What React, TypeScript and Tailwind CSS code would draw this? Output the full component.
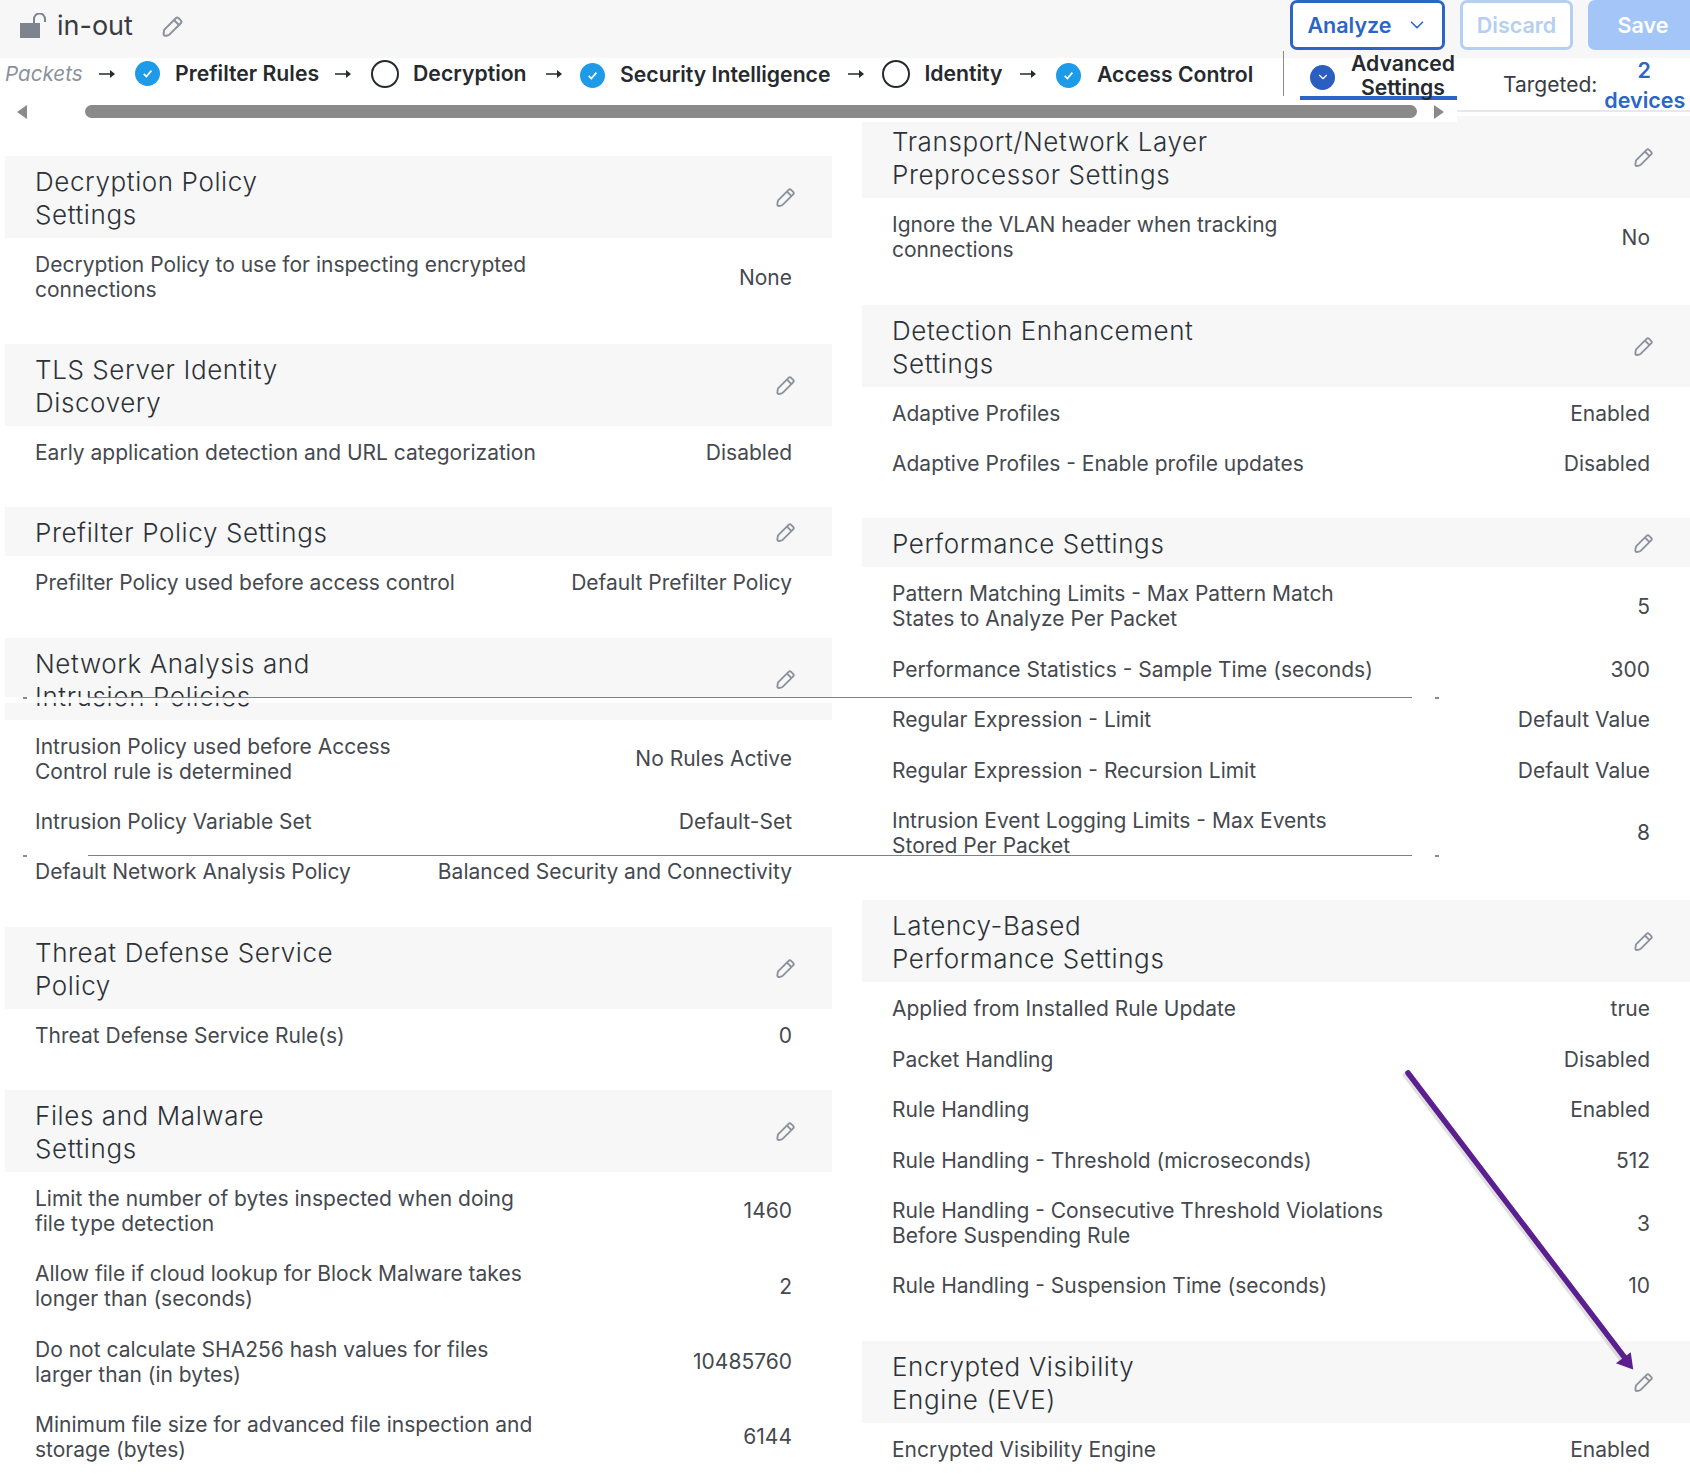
import React from 'react';
import {ChevronDown} from 'lucide-react';

type Row = {label: string; value: string};
type Section = {title: string; rows: Row[]};

const leftSections: Section[] = [
	{title: 'Decryption Policy\nSettings', rows: [{label: 'Decryption Policy to use for inspecting encrypted\nconnections', value: 'None'}]},
	{title: 'TLS Server Identity\nDiscovery', rows: [{label: 'Early application detection and URL categorization', value: 'Disabled'}]},
	{title: 'Prefilter Policy Settings', rows: [{label: 'Prefilter Policy used before access control', value: 'Default Prefilter Policy'}]},
	{
		title: 'Network Analysis and\nIntrusion Policies',
		rows: [
			{label: 'Intrusion Policy used before Access\nControl rule is determined', value: 'No Rules Active'},
			{label: 'Intrusion Policy Variable Set', value: 'Default-Set'},
			{label: 'Default Network Analysis Policy', value: 'Balanced Security and Connectivity'},
		],
	},
	{title: 'Threat Defense Service\nPolicy', rows: [{label: 'Threat Defense Service Rule(s)', value: '0'}]},
	{
		title: 'Files and Malware\nSettings',
		rows: [
			{label: 'Limit the number of bytes inspected when doing\nfile type detection', value: '1460'},
			{label: 'Allow file if cloud lookup for Block Malware takes\nlonger than (seconds)', value: '2'},
			{label: 'Do not calculate SHA256 hash values for files\nlarger than (in bytes)', value: '10485760'},
			{label: 'Minimum file size for advanced file inspection and\nstorage (bytes)', value: '6144'},
		],
	},
];

const rightSections: Section[] = [
	{title: 'Transport/Network Layer\nPreprocessor Settings', rows: [{label: 'Ignore the VLAN header when tracking\nconnections', value: 'No'}]},
	{
		title: 'Detection Enhancement\nSettings',
		rows: [
			{label: 'Adaptive Profiles', value: 'Enabled'},
			{label: 'Adaptive Profiles - Enable profile updates', value: 'Disabled'},
		],
	},
	{
		title: 'Performance Settings',
		rows: [
			{label: 'Pattern Matching Limits - Max Pattern Match\nStates to Analyze Per Packet', value: '5'},
			{label: 'Performance Statistics - Sample Time (seconds)', value: '300'},
			{label: 'Regular Expression - Limit', value: 'Default Value'},
			{label: 'Regular Expression - Recursion Limit', value: 'Default Value'},
			{label: 'Intrusion Event Logging Limits - Max Events\nStored Per Packet', value: '8'},
		],
	},
	{
		title: 'Latency-Based\nPerformance Settings',
		rows: [
			{label: 'Applied from Installed Rule Update', value: 'true'},
			{label: 'Packet Handling', value: 'Disabled'},
			{label: 'Rule Handling', value: 'Enabled'},
			{label: 'Rule Handling - Threshold (microseconds)', value: '512'},
			{label: 'Rule Handling - Consecutive Threshold Violations\nBefore Suspending Rule', value: '3'},
			{label: 'Rule Handling - Suspension Time (seconds)', value: '10'},
		],
	},
	{title: 'Encrypted Visibility\nEngine (EVE)', rows: [{label: 'Encrypted Visibility Engine', value: 'Enabled'}]},
];

function PencilIcon({className}: {className?: string}) {
	return (
		<svg viewBox="0 0 24 24" className={className} fill="none" stroke="#8b929c" strokeWidth="2" strokeLinejoin="round">
			<path d="M3.6 15.4 14.8 4.2a2 2 0 0 1 2.8 0l2.2 2.2a2 2 0 0 1 0 2.8L8.6 20.4a3.5 3.5 0 0 1-2 1l-2.4.4a1.4 1.4 0 0 1-1.6-1.6l.3-2.6a3.5 3.5 0 0 1 .7-2.2Z"/>
			<path d="M13 6l5 5"/>
		</svg>
	);
}

function CheckCircle({color = '#1d9be8'}: {color?: string}) {
	return (
		<span className="flex size-[25px] shrink-0 items-center justify-center rounded-full" style={{backgroundColor: color}}>
			<svg viewBox="0 0 12 12" className="size-[13px]" fill="none" stroke="white" strokeWidth="1.6">
				<path d="M2.5 6.3 5 8.8l4.6-5.4"/>
			</svg>
		</span>
	);
}

function ArrowIcon({className}: {className?: string}) {
	return (
		<svg viewBox="0 0 16 12" className={`h-[12px] w-[16px] shrink-0 ${className ?? ''}`} fill="#26292e">
			<path d="M0 5.2h11V2l5 4-5 4V6.8H0Z"/>
		</svg>
	);
}

function Step({label, done, className}: {label: string; done: boolean; className?: string}) {
	return (
		<div className={`flex shrink-0 items-center ${done ? 'gap-[15.5px]' : 'gap-[14px]'} ${className ?? ''}`}>
			{done ? <CheckCircle/> : <span className="size-[28px] shrink-0 rounded-full border-2 border-[#26292e]"/>}
			<span className="text-[21.2px] font-semibold text-[#26292e]">{label}</span>
		</div>
	);
}

function SectionBlock({section, gap}: {section: Section; gap: string}) {
	return (
		<section className={gap}>
			<div className="flex items-center justify-between bg-[#f7f7f7] pb-[7px] pl-[30px] pr-[35px] pt-[9px]">
				<h2 className="whitespace-pre-line text-[26px] font-[350] leading-[33px] tracking-[0.6px] text-[#2d3238]">{section.title}</h2>
				<PencilIcon className="mt-[-2px] size-[22px] shrink-0"/>
			</div>
			<div className="pb-[12.5px] pl-[30px] pr-[40px] pt-[14px]">
				{section.rows.map((row) => (
					<div key={row.label} className="flex items-center justify-between pb-[25.4px] text-[21px] leading-[25px] text-[#45494f] last:pb-0">
						<span className="whitespace-pre-line">{row.label}</span>
						<span className="whitespace-nowrap">{row.value}</span>
					</div>
				))}
			</div>
		</section>
	);
}

function AdvancedDot() {
	return (
		<span className="flex size-[25px] shrink-0 items-center justify-center rounded-full bg-[#2b5fbf]">
			<ChevronDown className="size-[14px] text-white" strokeWidth={2}/>
		</span>
	);
}

function ScrollGhost({top}: {top: string}) {
	return (
		<div className={`absolute left-[5px] z-10 h-[6px] w-[1452px] bg-white/90 ${top}`}>
			<span className="absolute left-[18px] top-0 h-[2px] w-[4px] bg-[#8a8a8a]"/>
			<div className="absolute left-[83px] top-0 h-px w-[1324px] bg-[#808080]"/>
			<span className="absolute left-[1430px] top-0 h-[2px] w-[4px] bg-[#8a8a8a]"/>
		</div>
	);
}

export default function App() {
	return (
		<div className="relative h-[1477px] w-[1690px] overflow-hidden bg-white font-['Inter',sans-serif]">
			<header className="flex h-[58px] items-start justify-between bg-[#f7f7f7]">
				<div className="flex h-[52px] items-center pl-[20px]">
					<svg viewBox="0 0 28 26" className="h-[26px] w-[28px]">
						<rect x="0" y="10" width="20" height="15" fill="#7d848e"/>
						<path d="M14 11V6a5.5 5.5 0 0 1 11 0v3" fill="none" stroke="#7d848e" strokeWidth="2"/>
					</svg>
					<span className="ml-[9px] text-[27px] text-[#383c42]">in-out</span>
					<PencilIcon className="ml-[28px] size-[24px]"/>
				</div>
				<div className="flex items-start gap-[15px]">
					<button className="flex h-[50px] w-[155px] items-center justify-center gap-[14px] rounded-[7px] border-[3px] border-[#2b66c4] bg-white text-[21.5px] font-semibold text-[#2b66c4]">
						Analyze
						<ChevronDown className="size-[22px]" strokeWidth={1.8}/>
					</button>
					<button className="h-[50px] w-[113px] rounded-[7px] border-[3px] border-[#b4cff2] bg-white text-[21.5px] font-semibold text-[#b4cff2]">Discard</button>
					<button className="h-[50px] w-[102px] rounded-l-[7px] bg-[#a3c5f7] pl-[8px] text-[21.5px] font-semibold text-white">Save</button>
				</div>
			</header>

			<div className="flex h-[58px] items-start">
				<div className="relative z-10 ml-[5px] h-[64px] w-[1452px] bg-white">
					<div className="flex h-[47px] items-start">
						<div className="flex h-[32px] items-center">
							<span className="text-[20.6px] italic text-[#8b929c]">Packets</span>
							<ArrowIcon className="ml-[16px]"/>
							<Step label="Prefilter Rules" done className="ml-[20px]"/>
							<ArrowIcon className="ml-[16px]"/>
							<Step label="Decryption" done={false} className="ml-[20px]"/>
							<ArrowIcon className="ml-[19px]"/>
							<Step label="Security Intelligence" done className="ml-[18px] mt-[2px]"/>
							<ArrowIcon className="ml-[18px]"/>
							<Step label="Identity" done={false} className="ml-[18px]"/>
							<ArrowIcon className="ml-[18px]"/>
							<Step label="Access Control" done className="ml-[20px] mt-[2px]"/>
						</div>
						<div className="ml-[30px] mt-[-7px] h-[45px] w-px shrink-0 bg-[#8b8b8b]"/>
						<div className="ml-[16px] flex h-[42px] w-[157px] shrink-0 items-center gap-[14px] border-b-4 border-[#2b66c4] pl-[10px]">
							<AdvancedDot/>
							<span className="mt-[-5px] w-[108px] whitespace-nowrap text-center text-[21.2px] font-semibold leading-[24px] text-[#26292e]">Advanced<br/>Settings</span>
						</div>
					</div>
					<div className="flex h-[17px] items-start">
						<span className="ml-[12px] h-0 w-0 border-y-[7px] border-r-[10px] border-y-transparent border-r-[#8a8a8a]"/>
						<div className="ml-[58px] h-[13px] w-[1332px] rounded-full bg-[#8a8a8a]"/>
						<span className="ml-[17px] h-0 w-0 border-y-[7px] border-l-[10px] border-y-transparent border-l-[#8a8a8a]"/>
					</div>
				</div>
				<div className="flex h-[54px] flex-1 items-center border-b-2 border-[#e8e8e8] pl-[46px] pt-[2px]">
					<span className="text-[21px] text-[#383c42]">Targeted:</span>
					<a className="ml-[7px] w-[80px] whitespace-nowrap text-center text-[21.5px] font-semibold leading-[30px] text-[#2b66c4]">2<br/>devices</a>
				</div>
			</div>

			<main className="grid grid-cols-[827px_828px] gap-x-[30px] pl-[5px]">
				<div className="pt-[40px]">
					{leftSections.map((s) => <SectionBlock key={s.title} section={s} gap="mb-[29.7px]"/>)}
				</div>
				<div>
					{rightSections.map((s) => <SectionBlock key={s.title} section={s} gap="mb-[30px]"/>)}
				</div>
			</main>

			{/* stray scrollbar ghosts sitting on top of the content */}
			<ScrollGhost top="top-[697px]"/>
			<ScrollGhost top="top-[855px]"/>

			<svg viewBox="0 0 1690 1477" className="pointer-events-none absolute inset-0 z-20 h-[1477px] w-[1690px]">
				<path d="M1408 1073 1625 1358" stroke="#000" strokeOpacity=".12" strokeWidth="6.5" strokeLinecap="round" transform="translate(-2 2)"/>
				<path d="M1408 1073 1625 1358" stroke="#5b1f8f" strokeWidth="5.5" strokeLinecap="round"/>
				<path d="M1632 1368 1618 1363 1630 1354Z" fill="#5b1f8f" stroke="#5b1f8f" strokeWidth="2"/>
			</svg>
		</div>
	);
}
